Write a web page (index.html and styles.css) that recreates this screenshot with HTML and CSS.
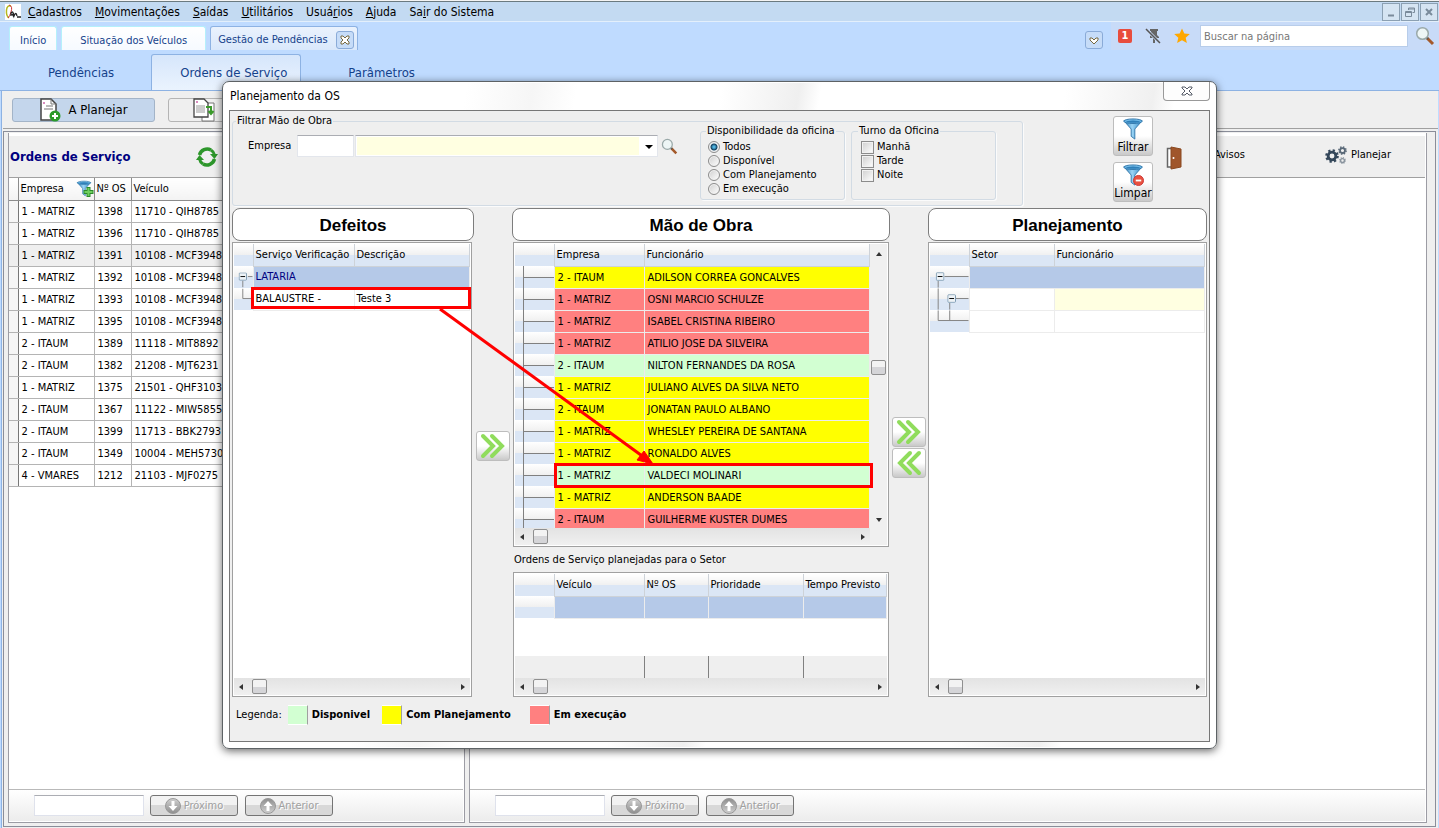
FILE: index.html
```html
<!DOCTYPE html>
<html lang="pt-BR">

<head>
    <meta charset="UTF-8">
    <title>Gestão de Pendências</title>
    <link rel="stylesheet" href="styles.css">
</head>

<body>
    <svg class="defs" aria-hidden="true">
        <defs>
            <linearGradient id="blue" x1="0" x2="1">
                <stop offset="0" stop-color="#2b7cb5" />
                <stop offset=".45" stop-color="#9ad4f5" />
                <stop offset="1" stop-color="#2d86c4" />
            </linearGradient>
            <linearGradient id="gray" x1="0" y1="0" x2="0" y2="1">
                <stop offset="0" stop-color="#d0d0d0" />
                <stop offset="1" stop-color="#8e8e8e" />
            </linearGradient>
            <symbol id="funnel" viewBox="0 0 24 24">
                <path d="M2 3 L10 12 V20 L14 23 V12 L22 3 Z" fill="url(#blue)" stroke="#2f74a8" />
                <ellipse cx="12" cy="3.5" rx="10" ry="2.5" fill="#6fb9e6" stroke="#2f74a8" />
                <ellipse cx="12" cy="4" rx="7.5" ry="1.2" fill="#2f7fb8" />
            </symbol>
            <symbol id="lens" viewBox="0 0 20 20">
                <path d="M12 12 L18 18" stroke="#a4592a" stroke-width="3" />
                <path d="M11 11 L13 13" stroke="#555" stroke-width="2" />
                <circle cx="7.500" cy="7.500" r="5.800" fill="#eef6f6" stroke="#9aa9a9" stroke-width="1.500" />
            </symbol>
            <symbol id="minus" viewBox="0 0 9 9">
                <rect x=".5" y=".5" width="8" height="8" rx="1" fill="#eef3f7" stroke="#7796ad" />
                <path d="M2 4.500 H7" stroke="#000" />
            </symbol>
            <symbol id="chevrons" viewBox="0 0 26 26">
                <path d="M3 3 L13 13 L3 23 M12 3 L22 13 L12 23" fill="none" stroke="#90dc5c" stroke-width="4" stroke-linecap="round" />
            </symbol>
            <symbol id="down" viewBox="0 0 16 16">
                <circle cx="8" cy="8" r="7.500" fill="url(#gray)" stroke="#999" />
                <path d="M6.500 3 H9.500 V8 H12.500 L8 13 L3.500 8 H6.500 Z" fill="#fff" />
            </symbol>
            <symbol id="gear" viewBox="-10 -10 20 20">
                <circle r="5.500" fill="none" stroke="currentColor" stroke-width="4" />
                <circle r="8" fill="none" stroke="currentColor" stroke-width="3.500" stroke-dasharray="3.140 3.140" />
            </symbol>
        </defs>
    </svg>

    <nav class="menu">
        <svg class="logo" viewBox="0 0 16 16">
            <rect width="16" height="16" fill="#fff" />
            <path d="M6 2 Q2 1 1.500 6 Q1 12 4 14" fill="none" stroke="#b5b820" stroke-width="1.500" />
            <path d="M4 1 Q8 2 6 8 Q5 12 3 14" fill="none" stroke="#c33" />
            <path d="M6 12 V9 Q8 6 9 12 Q11 7 12 12 M12 13 H16 M7 10 L9 13" fill="none" stroke="#222" stroke-width="1.300" />
        </svg>
        <a href="#"><u>C</u>adastros</a>
        <a href="#"><u>M</u>ovimentações</a>
        <a href="#"><u>S</u>aídas</a>
        <a href="#"><u>U</u>tilitários</a>
        <a href="#">Usuá<u>r</u>ios</a>
        <a href="#"><u>A</u>juda</a>
        <a href="#">Sa<u>i</u>r do Sistema</a>
        <div class="win-buttons">
            <button aria-label="Minimizar"><svg viewBox="0 0 16 16"><path d="M5 11.500 H11" /></svg></button>
            <button aria-label="Restaurar"><svg class="thin" viewBox="0 0 16 16"><path d="M6.500 6 V4 H12.500 V8.500 H10.500 M6.500 5 H12.500 M3.500 7.500 H9.500 V12.500 H3.500 Z M3.500 8.500 H9.500" /></svg></button>
            <button aria-label="Fechar"><svg viewBox="0 0 16 16"><path d="M5 5 L11 11 M11 5 L5 11" /></svg></button>
        </div>
    </nav>

    <div class="tabs">
        <a class="tab" href="#">Início</a>
        <a class="tab wide" href="#">Situação dos Veículos</a>
        <div class="tab current">
            <a href="#">Gestão de Pendências</a>
            <button class="square" aria-label="Fechar aba"><svg viewBox="0 0 16 16"><path d="M4 4 H6 L8 6 L10 4 H12 V6 L10 8 L12 10 V12 H10 L8 10 L6 12 H4 V10 L6 8 L4 6 Z" /></svg></button>
        </div>
        <div class="tools">
            <button class="square" aria-label="Listar abas"><svg viewBox="0 0 16 16"><path d="M4 6 H6 L8 8 L10 6 H12 V8 L8 12 L4 8 Z" /></svg></button>
            <div class="search">
                <span class="badge">1</span>
                <svg class="pin" viewBox="0 0 16 16">
                    <path d="M5 1 H13 V3 H12 V7 L14 9 V10 H10 V15 H8 V10 H5 V8 L6 7 V3 H5 Z" fill="#666" />
                    <path d="M1 1 L15 15" stroke="#c8d9f5" stroke-width="3" />
                    <path d="M1 1 L15 15" stroke="#555" stroke-width="1.500" />
                </svg>
                <svg class="star" viewBox="0 0 16 16"><path d="M8 .5 L10.300 5.500 L15.800 6.100 L11.700 9.700 L12.900 15 L8 12.300 L3.100 15 L4.300 9.700 L.2 6.100 L5.700 5.500 Z" fill="#ffa800" /></svg>
                <input type="text" aria-label="Buscar" placeholder="Buscar na página">
                <svg class="search-icon"><use href="#lens" /></svg>
            </div>
        </div>
    </div>

    <div class="subtabs">
        <a href="#">Pendências</a>
        <a class="current" href="#">Ordens de Serviço</a>
        <a href="#">Parâmetros</a>
    </div>

    <main class="workspace">
        <div class="toolbar">
            <button class="pressed">
                <svg viewBox="0 0 22 24">
                    <path d="M2 1 H12 L17 6 V22 H2 Z" fill="#fff" stroke="#444" stroke-width="1.500" />
                    <path d="M12 1 V6 H17 M7 8 H14 M5 11 H14" fill="none" stroke="#777" />
                    <circle cx="5" cy="5" r="1" fill="#c6a" />
                    <circle cx="16" cy="18" r="5.500" fill="#2a9a2a" />
                    <path d="M16 15 V21 M13 18 H19" stroke="#fff" stroke-width="2" />
                </svg>
                A Planejar
            </button>
            <button class="icon-only" aria-label="Planejadas">
                <svg viewBox="0 0 22 24">
                    <path d="M9 5 H21 V23 H9 Z" fill="#fff" stroke="#777" />
                    <path d="M1 1 H11 L15 5 V19 H1 Z" fill="#fff" stroke="#444" stroke-width="1.300" />
                    <path d="M3 8 H12 M3 10 H12 M3 12 H12 M3 14 H12" stroke="#999" />
                    <circle cx="4" cy="4" r="1" fill="#c6a" />
                    <path d="M13 9 H18 V15 M15.500 13 L18 16 L20.500 13" fill="none" stroke="#3a9a2a" stroke-width="2" />
                </svg>
            </button>
        </div>

        <div class="panels">
            <section class="panel">
                <header>
                    <h2>Ordens de Serviço</h2>
                    <svg class="refresh" viewBox="0 0 22 22">
                        <path d="M3.500 9 A8 8 0 0 1 15 4 M18.500 13 A8 8 0 0 1 7 18" fill="none" stroke="#2d962b" stroke-width="3.500" />
                        <path d="M14 8 H22 L18.500 13 Z M8 14 H0 L3.500 9 Z" fill="#2d962b" />
                        <path d="M15 4 Q18 6 18.500 9 M7 18 Q4 16 3.500 13" fill="none" stroke="#2d962b" stroke-width="3" />
                    </svg>
                </header>
                <table class="orders">
                    <colgroup><col class="w-mark"><col class="w-company"><col class="w-number"><col></colgroup>
                    <thead>
                        <tr>
                            <th></th>
                            <th><span class="filtered">Empresa
                                <svg viewBox="0 0 18 18"><use href="#funnel" width="16" height="17" /><path d="M12.500 7 V17 M7.500 12 H17.500" stroke="#2a8a2a" stroke-width="4" /><path d="M12.500 8 V16 M8.500 12 H16.500" stroke="#6ecf5e" stroke-width="2" /></svg>
                            </span></th>
                            <th>Nº OS</th>
                            <th>Veículo</th>
                        </tr>
                    </thead>
                    <tbody>
                        <tr><td></td><td>1 - MATRIZ</td><td>1398</td><td>11710 - QIH8785</td></tr>
                        <tr><td></td><td>1 - MATRIZ</td><td>1396</td><td>11710 - QIH8785</td></tr>
                        <tr class="selected"><td></td><td>1 - MATRIZ</td><td>1391</td><td>10108 - MCF3948</td></tr>
                        <tr><td></td><td>1 - MATRIZ</td><td>1392</td><td>10108 - MCF3948</td></tr>
                        <tr><td></td><td>1 - MATRIZ</td><td>1393</td><td>10108 - MCF3948</td></tr>
                        <tr><td></td><td>1 - MATRIZ</td><td>1395</td><td>10108 - MCF3948</td></tr>
                        <tr><td></td><td>2 - ITAUM</td><td>1389</td><td>11118 - MIT8892</td></tr>
                        <tr><td></td><td>2 - ITAUM</td><td>1382</td><td>21208 - MJT6231</td></tr>
                        <tr><td></td><td>1 - MATRIZ</td><td>1375</td><td>21501 - QHF3103</td></tr>
                        <tr><td></td><td>2 - ITAUM</td><td>1367</td><td>11122 - MIW5855</td></tr>
                        <tr><td></td><td>2 - ITAUM</td><td>1399</td><td>11713 - BBK2793</td></tr>
                        <tr><td></td><td>2 - ITAUM</td><td>1349</td><td>10004 - MEH5730</td></tr>
                        <tr><td></td><td>4 - VMARES</td><td>1212</td><td>21103 - MJF0275</td></tr>
                    </tbody>
                </table>
                <footer>
                    <input type="text" aria-label="Localizar ordem">
                    <button disabled><svg><use href="#down" /></svg>Próximo</button>
                    <button disabled><svg class="flip"><use href="#down" /></svg>Anterior</button>
                </footer>
            </section>

            <section class="panel">
                <header class="actions">
                    <a href="#">Avisos</a>
                    <a href="#">
                        <svg viewBox="0 0 22 18">
                            <use href="#gear" x="0" y="3" width="14" height="14" color="#34475a" />
                            <use href="#gear" x="13" y="0" width="9" height="9" color="#5a6978" />
                            <use href="#gear" x="14" y="11" width="7" height="7" color="#8a949e" />
                        </svg>
                        Planejar
                    </a>
                </header>
                <footer>
                    <input type="text" aria-label="Localizar planejamento">
                    <button disabled><svg><use href="#down" /></svg>Próximo</button>
                    <button disabled><svg class="flip"><use href="#down" /></svg>Anterior</button>
                </footer>
            </section>
        </div>
    </main>

    <div class="dialog" role="dialog" aria-labelledby="dialog-title">
        <div class="title-bar">
            <h1 id="dialog-title">Planejamento da OS</h1>
            <button class="close" aria-label="Fechar"><svg viewBox="0 0 12 10"><path d="M1 1 H4 L6 3 L8 1 H11 V2 L8 5 L11 8 V9 H8 L6 7 L4 9 H1 V8 L4 5 L1 2 Z" /></svg></button>
        </div>
        <div class="dialog-body">
            <div class="filters">
                <fieldset class="filter-box">
                    <legend>Filtrar Mão de Obra</legend>
                    <div class="company">
                        <label for="company">Empresa</label>
                        <input id="company" type="text">
                        <div class="combo">
                            <select aria-label="Nome da empresa"><option></option></select>
                        </div>
                        <svg><use href="#lens" /></svg>
                    </div>
                    <fieldset class="options">
                        <legend>Disponibilidade da oficina</legend>
                        <label><input type="radio" name="status" checked>Todos</label>
                        <label><input type="radio" name="status">Disponível</label>
                        <label><input type="radio" name="status">Com Planejamento</label>
                        <label><input type="radio" name="status">Em execução</label>
                    </fieldset>
                    <fieldset class="options">
                        <legend>Turno da Oficina</legend>
                        <label><input type="checkbox">Manhã</label>
                        <label><input type="checkbox">Tarde</label>
                        <label><input type="checkbox">Noite</label>
                    </fieldset>
                </fieldset>
                <div class="filter-actions">
                    <button class="glossy"><svg><use href="#funnel" /></svg>Filtrar</button>
                    <button class="glossy"><svg viewBox="0 0 24 24"><use href="#funnel" /><circle cx="18" cy="18" r="5.500" fill="#e8513f" stroke="#c33" /><path d="M15 18 H21" stroke="#fff" stroke-width="2" /></svg>Limpar</button>
                </div>
                <button class="door" aria-label="Sair">
                    <svg viewBox="0 0 16 24">
                        <path d="M6 2.500 H1.500 V21 H6" fill="#fff" stroke="#666" stroke-width="1.500" />
                        <path d="M5 1 L15 3 V21 L5 23 Z" fill="#a0562b" stroke="#8a4820" />
                        <circle cx="7.500" cy="12" r="1" fill="#fff" />
                    </svg>
                </button>
            </div>

            <div class="columns">
                <section class="column">
                    <h2>Defeitos</h2>
                    <div class="grid-box grow">
                        <table class="grid">
                            <colgroup><col class="w-tree-small"><col class="w-check"><col></colgroup>
                            <thead>
                                <tr><th></th><th>Serviço Verificação</th><th>Descrição</th></tr>
                            </thead>
                            <tbody>
                                <tr class="active"><td class="tree"><svg viewBox="0 0 20 22"><path d="M15 10.500 H20 M9.500 15 V22" /><use href="#minus" x="5" y="6" width="9" height="9" /></svg></td><td colspan="2">LATARIA</td></tr>
                                <tr><td class="tree"><svg viewBox="0 0 20 22"><path d="M9.500 0 V10.500 H20" /></svg></td><td>BALAUSTRE -</td><td>Teste 3</td></tr>
                            </tbody>
                        </table>
                        <div class="h-scroll"><i class="left"></i><i class="thumb"></i><i class="right"></i></div>
                    </div>
                </section>

                <div class="movers single">
                    <button class="glossy" aria-label="Adicionar mão de obra"><svg><use href="#chevrons" /></svg></button>
                </div>

                <section class="column center">
                    <h2>Mão de Obra</h2>
                    <div class="grid-box workers">
                        <div class="scroll-area">
                            <table class="grid">
                                <colgroup><col class="w-tree"><col class="w-name"><col></colgroup>
                                <thead>
                                    <tr><th></th><th>Empresa</th><th>Funcionário</th></tr>
                                </thead>
                                <tbody>
                                    <tr class="planned"><td class="branch"></td><td>2 - ITAUM</td><td>ADILSON CORREA GONCALVES</td></tr>
                                    <tr class="busy"><td class="branch"></td><td>1 - MATRIZ</td><td>OSNI MARCIO SCHULZE</td></tr>
                                    <tr class="busy"><td class="branch"></td><td>1 - MATRIZ</td><td>ISABEL CRISTINA RIBEIRO</td></tr>
                                    <tr class="busy"><td class="branch"></td><td>1 - MATRIZ</td><td>ATILIO JOSE DA SILVEIRA</td></tr>
                                    <tr class="free"><td class="branch"></td><td>2 - ITAUM</td><td>NILTON FERNANDES DA ROSA</td></tr>
                                    <tr class="planned"><td class="branch"></td><td>1 - MATRIZ</td><td>JULIANO ALVES DA SILVA NETO</td></tr>
                                    <tr class="planned"><td class="branch"></td><td>2 - ITAUM</td><td>JONATAN PAULO ALBANO</td></tr>
                                    <tr class="planned"><td class="branch"></td><td>1 - MATRIZ</td><td>WHESLEY PEREIRA DE SANTANA</td></tr>
                                    <tr class="planned"><td class="branch"></td><td>1 - MATRIZ</td><td>RONALDO ALVES</td></tr>
                                    <tr class="free"><td class="branch"></td><td>1 - MATRIZ</td><td>VALDECI MOLINARI</td></tr>
                                    <tr class="planned"><td class="branch"></td><td>1 - MATRIZ</td><td>ANDERSON BAADE</td></tr>
                                    <tr class="busy"><td class="branch"></td><td>2 - ITAUM</td><td>GUILHERME KUSTER DUMES</td></tr>
                                </tbody>
                            </table>
                            <div class="v-scroll"><i class="up"></i><i class="thumb"></i><i class="down"></i></div>
                        </div>
                        <div class="h-scroll inset"><i class="left"></i><i class="thumb"></i><i class="right"></i></div>
                    </div>
                    <p>Ordens de Serviço planejadas para o Setor</p>
                    <div class="grid-box grow">
                        <table class="grid">
                            <colgroup><col class="w-tree"><col class="w-name"><col class="w-os"><col class="w-priority"><col></colgroup>
                            <thead>
                                <tr><th></th><th>Veículo</th><th>Nº OS</th><th>Prioridade</th><th>Tempo Previsto</th></tr>
                            </thead>
                            <tbody>
                                <tr class="active"><td class="tree"></td><td></td><td></td><td></td><td></td></tr>
                            </tbody>
                        </table>
                        <table class="grid totals">
                            <colgroup><col class="w-tree"><col class="w-name"><col class="w-os"><col class="w-priority"><col></colgroup>
                            <tbody>
                                <tr><td></td><td></td><td></td><td></td><td></td></tr>
                            </tbody>
                        </table>
                        <div class="h-scroll"><i class="left"></i><i class="thumb"></i><i class="right"></i></div>
                    </div>
                </section>

                <div class="movers">
                    <button class="glossy" aria-label="Incluir no planejamento"><svg><use href="#chevrons" /></svg></button>
                    <button class="glossy" aria-label="Remover do planejamento"><svg class="flip"><use href="#chevrons" /></svg></button>
                </div>

                <section class="column last">
                    <h2>Planejamento</h2>
                    <div class="grid-box grow">
                        <table class="grid">
                            <colgroup><col class="w-tree"><col class="w-sector"><col></colgroup>
                            <thead>
                                <tr><th></th><th>Setor</th><th>Funcionário</th></tr>
                            </thead>
                            <tbody>
                                <tr class="active"><td class="tree"><svg viewBox="0 0 40 22"><path d="M15 10.500 H40 M8.500 15 V22" /><use href="#minus" x="6" y="6" width="9" height="9" /></svg></td><td colspan="2"></td></tr>
                                <tr><td class="tree"><svg viewBox="0 0 40 22"><path d="M27 10.500 H40 M8.500 0 V22 M20.500 15 V22" /><use href="#minus" x="18" y="6" width="9" height="9" /></svg></td><td></td><td class="required"></td></tr>
                                <tr><td class="tree"><svg viewBox="0 0 40 22"><path d="M8.500 0 V10.500 H40 M20.500 0 V10" /></svg></td><td></td><td></td></tr>
                            </tbody>
                        </table>
                        <div class="h-scroll"><i class="left"></i><i class="thumb"></i><i class="right"></i></div>
                    </div>
                </section>

                <svg class="callout" viewBox="0 0 660 300">
                    <rect x="20.500" y="80.500" width="217" height="19" />
                    <rect x="323.500" y="256.500" width="316" height="22" />
                    <path d="M208 101 L413 250" />
                    <path class="tip" d="M421 256 L405 252 L412 243 Z" />
                </svg>
            </div>

            <div class="legend">
                <span>Legenda:</span>
                <i class="free"></i><b>Disponivel</b>
                <i class="planned"></i><b>Com Planejamento</b>
                <i class="busy"></i><b>Em execução</b>
            </div>
        </div>
    </div>
</body>

</html>
```
FILE: styles.css
```css
* {
    box-sizing: border-box;
}

body {
    margin: 0;
    display: flex;
    flex-direction: column;
    min-height: 100vh;
    position: relative;
    overflow: hidden;
    background: #bfdbff;
    color: #000;
    font-family: "DejaVu Sans Condensed", "DejaVu Sans", sans-serif;
    font-size: 11px;
    line-height: 14px;
}

button,
input,
select {
    font: inherit;
    color: inherit;
    margin: 0;
    padding: 0;
}

a {
    color: inherit;
    text-decoration: none;
}

h1,
h2,
p {
    margin: 0;
}

.defs {
    position: absolute;
    width: 0;
    height: 0;
}

/* Menu */

.menu {
    display: flex;
    align-items: center;
    gap: 13px;
    height: 22px;
    padding: 2px 1px 0 5px;
    border-bottom: 1px solid #e3effb;
    background: linear-gradient(#f4f4f4 1px, #6b7a80 1px, #6b7a80 2px, #c3daf2 2px);
    font-size: 12px;
}

.logo {
    width: 16px;
    height: 16px;
    margin-right: -6px;
}

.win-buttons {
    display: flex;
    gap: 1px;
    margin-left: auto;
}

.win-buttons button {
    width: 18px;
    height: 18px;
    border: 1px solid #8ba0b3;
    background: #d5e4f2;
}

.win-buttons svg {
    display: block;
    width: 16px;
    height: 16px;
    fill: none;
    stroke: #7a8b9b;
    stroke-width: 2;
}

.win-buttons .thin {
    stroke-width: 1;
}

/* Tabs */

.tabs {
    display: flex;
    align-items: flex-end;
    gap: 4px;
    height: 28px;
    padding-left: 9px;
    color: #15428b;
}

.tab {
    display: flex;
    align-items: center;
    gap: 8px;
    height: 24px;
    padding: 4px 10px 0;
    border: 1px solid #b5f0fb;
    border-bottom: 0;
    border-radius: 3px 3px 0 0;
    background: linear-gradient(#fff, #f6faff);
}

.tab.wide {
    padding: 4px 18px 0;
}

.tab.current {
    padding: 2px 3px 0 7px;
    border-color: #8db2e3;
    background: linear-gradient(#eaf2fd, #d9e8fb);
}

.square {
    width: 18px;
    height: 18px;
    border: 1px solid #8aabd8;
    border-radius: 3px;
    background: #c6dcf8;
}

.square svg {
    display: block;
    width: 16px;
    height: 16px;
    fill: #fff;
    stroke: #77693f;
}

.tools {
    display: flex;
    align-items: flex-end;
    gap: 8px;
    margin-left: auto;
}

.tools > .square {
    margin-bottom: 1px;
}

.search {
    display: flex;
    align-items: center;
    height: 28px;
    padding: 0 4px 0 7px;
    background: #c8dbf8;
}

.badge {
    width: 14px;
    margin-right: 13px;
    border-radius: 2px;
    background: #e84c3d;
    color: #fff;
    font-weight: bold;
    text-align: center;
}

.pin,
.star {
    width: 16px;
    height: 16px;
    margin-right: 13px;
}

.star {
    margin-right: 10px;
}

.search input {
    width: 208px;
    height: 22px;
    padding: 0 3px;
    border: 1px solid #b8cdea;
    background: #fff;
}

.search input::placeholder {
    color: #777;
}

.search-icon {
    width: 20px;
    height: 20px;
    margin-left: 7px;
}

.subtabs {
    display: flex;
    align-items: flex-end;
    height: 41px;
    padding-left: 9px;
    border-bottom: 1px solid #8db2e3;
    color: #15428b;
    font-size: 13px;
}

.subtabs a {
    height: 36px;
    padding: 12px 37px 0 39px;
}

.subtabs .current {
    margin-right: 8px;
    padding: 11px 13px 0 28px;
    border: 1px solid #8db2e3;
    border-bottom: 0;
    border-radius: 3px 3px 0 0;
    background: linear-gradient(#d6e6fb, #eaf3fe);
}

/* Workspace */

.workspace {
    flex: 1;
    display: flex;
    flex-direction: column;
    margin: 0 1px;
    padding-left: 1px;
    border-left: 1px solid #8db2e3;
    background: #efefef;
}

.toolbar {
    display: flex;
    gap: 13px;
    height: 38px;
    padding: 7px 9px;
    border-bottom: 1px solid #a0a0a0;
    font-size: 13px;
}

.toolbar button {
    display: flex;
    align-items: center;
    justify-content: center;
    gap: 7px;
    width: 143px;
    height: 24px;
    border: 1px solid #b4b4b4;
    border-radius: 3px;
    background: #efefef;
}

.toolbar button.pressed {
    border-color: #a3b4c8;
    background: #c4d6ec;
}

.toolbar button.icon-only {
    justify-content: flex-start;
    padding-left: 24px;
}

.toolbar svg {
    width: 22px;
    height: 24px;
}

.panels {
    flex: 1;
    display: grid;
    grid-template-columns: 457fr 957fr;
    gap: 4px;
    margin: 2px 2px 1px 0;
    padding: 1px 8px 3px 4px;
    border: 1px solid #8a8d99;
    background: #efefef;
}

.panel {
    display: flex;
    flex-direction: column;
    min-width: 0;
    padding: 3px 1px 1px 0;
    border: 1px solid #9c9ca4;
    border-top: 0;
    background: #fff;
}

.panel header {
    display: flex;
    align-items: center;
    gap: 66px;
    height: 42px;
    padding-left: 1px;
    border-bottom: 1px solid #a0a0a0;
    background: #efefef;
}

.panel h2 {
    color: #000080;
    font-size: 13px;
}

.refresh {
    width: 22px;
    height: 22px;
}

.panel .actions {
    justify-content: flex-end;
    gap: 80px;
    padding: 0 34px 4px 0;
}

.actions a {
    display: flex;
    align-items: center;
    gap: 4px;
}

.actions svg {
    width: 22px;
    height: 18px;
}

.panel footer {
    display: flex;
    align-items: center;
    height: 32px;
    margin-top: auto;
    padding-left: 25px;
    border-top: 1px solid #b9b9b9;
    background: linear-gradient(#fff, #ececec);
}

.panel footer input {
    width: 110px;
    height: 21px;
    margin-right: 6px;
    border: 1px solid #dfe2ec;
    border-top-color: #abadb3;
    background: #fff;
}

.panel footer button {
    display: flex;
    align-items: center;
    justify-content: center;
    gap: 3px;
    width: 88px;
    height: 21px;
    margin-right: 7px;
    border: 1px solid #747474;
    border-radius: 3px;
    background: linear-gradient(#f2f2f2 50%, #d8d8d8 50%);
    color: #a0a0a0;
    text-shadow: 1px 1px #fff;
}

.panel footer svg {
    width: 16px;
    height: 16px;
}

.flip {
    transform: rotate(180deg);
}

/* Orders table */

table {
    width: 100%;
    border-collapse: collapse;
    table-layout: fixed;
}

th,
td {
    overflow: hidden;
    font-weight: normal;
    text-align: left;
    white-space: nowrap;
}

.orders th,
.orders td {
    height: 22px;
    padding: 2px 0 0 3px;
    border: 1px solid #b4b4b4;
    border-width: 0 1px 1px 0;
}

.orders th {
    padding: 0 0 0 2px;
    border-color: #8c8c8c;
    background: linear-gradient(#fff, #f3f3f3);
}

.orders td:first-child {
    border-right-color: #777;
    background: #f6f6f6;
}

.orders .selected td {
    background: #efefef;
}

.filtered {
    display: flex;
    align-items: center;
    justify-content: space-between;
}

.filtered svg {
    width: 18px;
    height: 18px;
}

.w-mark {
    width: 9px;
}

.w-company {
    width: 76px;
}

.w-number {
    width: 37px;
}

/* Dialog */

.dialog {
    position: absolute;
    top: 81px;
    left: 222px;
    right: 222px;
    display: flex;
    flex-direction: column;
    padding: 0 6px 6px;
    border: 1px solid #5d6265;
    border-radius: 7px;
    background: linear-gradient(100deg, #fff 22%, #f6f6f6 28%, #fff 32%, #fff 45%, #efefef 52%, #fff 54%, #fff 76%, #f0f0f0 84%, #fff 86%);
    box-shadow: 0 2px 9px rgba(0, 0, 0, .6), inset 0 0 0 1px #fff;
}

.title-bar {
    display: flex;
    align-items: flex-start;
    justify-content: space-between;
    height: 28px;
}

.title-bar h1 {
    padding: 7px 1px;
    font-size: 12px;
    font-weight: normal;
}

.close {
    width: 47px;
    height: 19px;
    border: 1px solid #999;
    border-top: 0;
    border-radius: 0 0 4px 4px;
    background: #fdfdfd;
}

.close svg {
    display: block;
    width: 12px;
    height: 10px;
    margin: 0 auto;
    fill: #fff;
    stroke: #555a66;
}

.dialog-body {
    padding: 0 2px;
    border: 1px solid #777;
    background: #efefef;
}

.filters {
    display: flex;
    height: 97px;
    padding-top: 3px;
}

fieldset {
    min-width: 0;
    margin: 0;
    padding: 0;
    border: 1px solid #d2dbe4;
    border-radius: 3px;
    box-shadow: 1px 1px #fbfbfb;
}

legend {
    margin-left: 3px;
    padding: 0 1px;
}

.filter-box {
    display: flex;
    flex: 1;
    height: 92px;
    margin-right: 90px;
}

.company {
    display: flex;
    flex: 1;
    align-items: center;
    height: 22px;
    margin-top: 7px;
    padding-left: 15px;
}

.company > input {
    width: 57px;
    height: 22px;
    margin: 0 1px 0 6px;
    border: 1px solid #e3e6ec;
    border-top-color: #abadb3;
    background: #fff;
}

.combo {
    flex: 1;
    position: relative;
}

.combo::after {
    content: "";
    position: absolute;
    top: 10px;
    right: 5px;
    border: 4px solid transparent;
    border-top-color: #000;
    pointer-events: none;
}

.combo select {
    display: block;
    appearance: none;
    width: 100%;
    height: 22px;
    border: 1px solid #e3e6ec;
    border-top-color: #abadb3;
    border-radius: 0;
    background: linear-gradient(to left, #fff 18px, #ffffe1 18px);
    box-shadow: inset 0 0 0 1px #fff;
}

.company svg {
    width: 17px;
    height: 17px;
    margin: 0 22px 0 3px;
}

.options {
    width: 145px;
    height: 76px;
    margin: -4px 6px 0 0;
    padding: 2px 0 0 7px;
}

.options legend {
    margin-left: -2px;
}

.options + .options {
    margin-right: 26px;
    padding-left: 9px;
}

.options + .options legend {
    margin-left: -3px;
}

.options label {
    display: flex;
    align-items: center;
    gap: 3px;
    height: 14px;
}

.options input {
    appearance: none;
    width: 13px;
    height: 13px;
    border: 1px solid #8c8c8c;
    background: linear-gradient(135deg, #cfcfcf, #fff);
    box-shadow: inset 0 0 0 1px #f2f2f2;
}

.options input[type="radio"] {
    width: 12px;
    height: 12px;
    border-radius: 50%;
}

.options input[type="radio"]:checked {
    background: radial-gradient(circle at 50% 50%, #4fb3e0 1px, #12405f 3px, #e8eef2 4px);
}

.filter-actions {
    display: flex;
    flex-direction: column;
    gap: 6px;
    padding-top: 2px;
}

.glossy {
    border: 1px solid #bdbdbd;
    border-radius: 3px;
    background: linear-gradient(#fff 50%, #c9c9c9);
}

.filter-actions button {
    width: 40px;
    height: 40px;
    font-size: 12px;
    line-height: 14px;
}

.filter-actions svg {
    display: block;
    width: 22px;
    height: 22px;
    margin: 0 auto;
}

.door {
    align-self: flex-start;
    width: 16px;
    height: 24px;
    margin: 32px 25px 0 13px;
    border: 0;
    background: none;
}

.door svg {
    display: block;
    width: 16px;
    height: 24px;
}

.columns {
    position: relative;
    display: grid;
    grid-template-columns: 242fr 34px 378fr 34px 279fr;
    gap: 2px;
}

.column {
    display: flex;
    flex-direction: column;
    height: 489px;
    min-width: 0;
}

.column h2 {
    height: 33px;
    margin-bottom: 1px;
    border: 1px solid #7d7d7d;
    border-radius: 8px;
    background: #fff;
    font-family: "Liberation Sans", sans-serif;
    font-size: 17px;
    line-height: 33px;
    text-align: center;
}

.column p {
    height: 25px;
    padding: 6px 2px 0;
}

.grid-box {
    display: flex;
    flex-direction: column;
    margin-right: 2px;
    padding: 1px 1px 1px;
    border: 1px solid #a0a0a0;
    background: #fff;
}

.center .grid-box {
    margin: 0 1px;
}

.last .grid-box {
    margin-right: 0;
}

.grow {
    flex: 1;
}

.grid th,
.grid td {
    height: 22px;
    padding: 0 0 0 2px;
    border: 1px solid #ececec;
    border-width: 0 1px 1px 0;
}

.grid th {
    border-color: #cdd2d8;
    background: linear-gradient(#fff, #f0f0f0 50%, #dbe6f5 50%);
}

.grid td:first-child,
.grid th:first-child {
    border-bottom: 0;
    background: linear-gradient(#fff, #f0f0f0 50%, #dbe6f5 50%);
}

.grid td.tree {
    padding: 0;
}

.tree svg {
    display: block;
    width: 100%;
    height: 22px;
    fill: none;
    stroke: #808080;
}

.grid .branch:first-child {
    background: linear-gradient(#808080, #808080) 8px 0 / 1px 100% no-repeat,
        linear-gradient(#808080, #808080) 8px 11px / 100% 1px no-repeat,
        linear-gradient(#fff, #f0f0f0 50%, #dbe6f5 50%);
}

.active td {
    background: #b5c9e8;
    color: #000080;
}

.planned {
    background: #ffff00;
}

.busy {
    background: #ff8080;
}

.free {
    background: #d2ffd2;
}

.required {
    background: #ffffe1;
}

.w-tree-small {
    width: 19px;
}

.w-check {
    width: 101px;
}

.w-tree {
    width: 39px;
}

.w-name {
    width: 90px;
}

.w-os {
    width: 64px;
}

.w-priority {
    width: 95px;
}

.w-sector {
    width: 85px;
}

.workers {
    height: 305px;
}

.workers td + td {
    padding: 2px 0 0 3px;
}

.scroll-area {
    display: flex;
    align-items: flex-start;
    height: 285px;
    overflow: hidden;
}

.scroll-area table {
    flex: 1;
}

.totals {
    margin-top: auto;
}

.totals td,
.totals td:first-child {
    border-color: #808080;
    border-bottom: 0;
    background: #efefef;
}

.totals td:first-child,
.totals td:last-child {
    border-right-color: #efefef;
}

/* Scroll bars */

.h-scroll,
.v-scroll {
    display: flex;
    align-items: center;
    background: linear-gradient(#e3e3e3, #f0f0f0);
}

.h-scroll {
    height: 17px;
    padding: 0 5px;
}

.grid + .h-scroll {
    margin-top: auto;
}

.totals + .h-scroll {
    margin-top: 0;
}

.h-scroll.inset {
    border-right: 17px solid #f0f0f0;
}

.v-scroll {
    flex-direction: column;
    width: 17px;
    height: 100%;
    padding: 8px 0 6px;
    background: #f0f0f0;
}

.left,
.right {
    border: 3px solid transparent;
    border-right: 4px solid #333;
    border-left: 0;
}

.right {
    margin-left: auto;
    border-right: 0;
    border-left: 4px solid #333;
}

.up,
.down {
    border: 3px solid transparent;
    border-top: 0;
    border-bottom: 4px solid #333;
}

.down {
    margin-top: auto;
    border-top: 4px solid #333;
    border-bottom: 0;
}

.thumb {
    width: 15px;
    height: 15px;
    margin-left: 9px;
    border: 1px solid #8f8f8f;
    border-radius: 2px;
    background: linear-gradient(#f3f3f3 50%, #d5d5d8 50%);
}

.v-scroll .thumb {
    margin: 104px 0 0;
}

.movers {
    display: flex;
    flex-direction: column;
    align-items: center;
    gap: 1px;
    padding-top: 209px;
}

.movers.single {
    padding-top: 223px;
}

.movers button {
    width: 34px;
    height: 30px;
}

.movers svg {
    display: block;
    width: 26px;
    height: 26px;
    margin: 0 auto;
}

/* Red marks over the grids */

.callout {
    position: absolute;
    top: 0;
    left: 0;
    width: 660px;
    height: 300px;
    fill: none;
    stroke: #f00;
    stroke-width: 3;
    pointer-events: none;
}

.callout .tip {
    fill: #f00;
    stroke-width: 1;
}

.legend {
    display: flex;
    align-items: center;
    height: 44px;
    padding: 0 4px 8px;
}

.legend i {
    width: 20px;
    height: 20px;
    margin: 0 4px 0 6px;
    border: 1px solid #fff;
    border-width: 1px 1px 1px 0;
    border-right-color: #a0a0a0;
}

.legend .planned {
    margin-left: 12px;
}

.legend .busy {
    margin-left: 19px;
}
```
